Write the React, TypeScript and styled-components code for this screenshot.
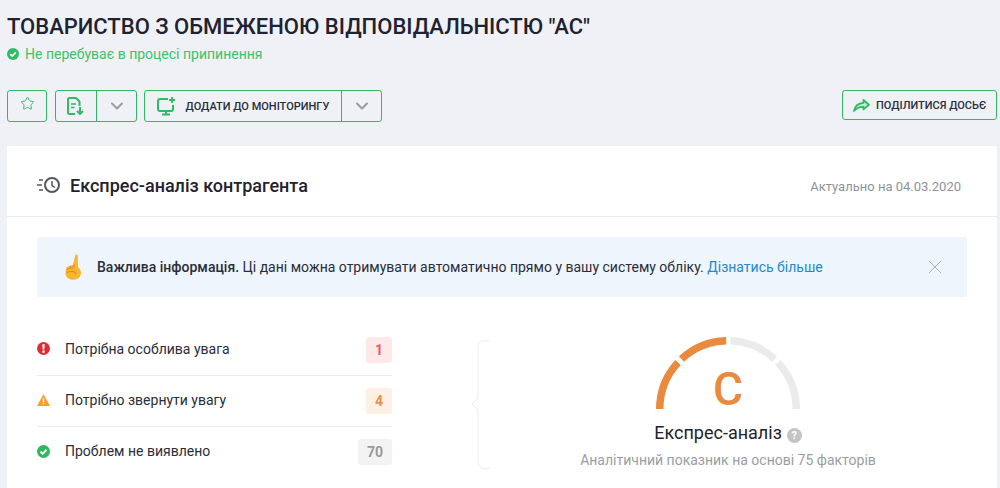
import styled, { createGlobalStyle } from "styled-components"
import { Star, ChevronDown, X } from "lucide-react"

const GlobalStyle = createGlobalStyle`
  html, body {
    margin: 0;
    padding: 0;
    background: #eff1f7;
    font-family: Roboto, "Liberation Sans", sans-serif;
    color: #1f2230;
    overflow: hidden;
  }
`

const Page = styled.div`
  width: 1000px;
  height: 488px;
  overflow: hidden;
  padding: 13px 0 0 7px;
  box-sizing: border-box;
`
const Title = styled.h1`
  margin: 0;
  font-size: 22px;
  line-height: 28px;
  font-weight: 500;
  color: #1f2230;
`
const Status = styled.div`
  display: flex;
  align-items: center;
  gap: 6px;
  margin-top: 4px;
  font-size: 14px;
  line-height: 18px;
  color: #3cc36a;
`
const Toolbar = styled.div`
  display: flex;
  align-items: flex-start;
  margin-top: 27px;
  padding-right: 3px;
`
const BtnGroup = styled.div`
  display: flex;
  height: 32px;
  box-sizing: border-box;
  border: 1px solid #2fbb62;
  border-radius: 3px;
  margin-right: 8px;
  &:nth-child(2) {
    margin-right: 7px;
  }
`
const BtnPart = styled.div<{ $w: number }>`
  display: flex;
  align-items: center;
  justify-content: center;
  gap: 10px;
  box-sizing: border-box;
  width: ${p => p.$w}px;
  color: #2fbb62;
  & + & {
    border-left: 1px solid #2fbb62;
  }
`
const StarIcon = styled(Star)`
  margin-bottom: 5px;
`
const BtnText = styled.span`
  font-size: 11px;
  font-weight: 500;
  white-space: nowrap;
  color: #2a2d3a;
`
const ShareBtn = styled(BtnGroup)`
  margin: 0 0 0 auto;
  height: 30px;
  align-items: center;
  width: 155px;
  padding-left: 10px;
  gap: 6px;
`
const Card = styled.section`
  margin-top: 24px;
  width: 990px;
  height: 360px;
  background: #fff;
`
const CardHead = styled.header`
  display: flex;
  align-items: center;
  justify-content: space-between;
  box-sizing: border-box;
  height: 71px;
  padding: 10px 36px 0 30px;
  border-bottom: 1px solid #e9eaee;
`
const CardTitle = styled.div`
  display: flex;
  align-items: center;
  gap: 9px;
  margin-bottom: 2px;
  font-size: 18px;
  font-weight: 500;
`
const Actual = styled.div`
  font-size: 13px;
  color: #8f929b;
`
const Banner = styled.div`
  display: flex;
  align-items: center;
  height: 60px;
  margin: 20px 30px 0 30px;
  padding: 0 20px 0 28px;
  background: #eff5fc;
  border-radius: 3px;
  font-size: 14px;
`
const Hand = styled.svg`
  flex: none;
  margin-right: 16px;
`
const BannerText = styled.div`
  flex: 1;
  color: #2a2d3a;
  b {
    font-weight: 500;
  }
  a {
    color: #2289cf;
    text-decoration: none;
  }
`
const Body = styled.div`
  display: flex;
  margin: 27px 30px 0 30px;
`
const List = styled.div`
  flex: none;
  width: 355px;
`
const Row = styled.div`
  display: flex;
  align-items: center;
  box-sizing: border-box;
  height: 51px;
  font-size: 14px;
  color: #2a2d3a;
  & + & {
    border-top: 1px solid #eceded;
  }
`
const RowIcon = styled.span`
  display: flex;
  justify-content: center;
  width: 13px;
  margin: 0 15px 2px 0;
`
const RowLabel = styled.span`
  margin-bottom: 2px;
`
const Count = styled.span<{ $bg: string; $fg: string }>`
  margin-left: auto;
  min-width: 26px;
  padding: 0 9px;
  box-sizing: border-box;
  height: 26px;
  line-height: 26px;
  text-align: center;
  font-size: 14px;
  font-weight: 700;
  border-radius: 3px;
  background: ${p => p.$bg};
  color: ${p => p.$fg};
`
const Brace = styled.svg`
  flex: none;
  margin: 16px 0 0 79px;
`
const Score = styled.div`
  flex: none;
  width: 476px;
  padding-top: 13px;
  display: flex;
  flex-direction: column;
  align-items: center;
`
const Gauge = styled.div`
  position: relative;
  width: 144px;
  height: 72px;
`
const Grade = styled.span`
  position: absolute;
  left: 0;
  right: 0;
  bottom: -5px;
  text-align: center;
  font-size: 46px;
  font-weight: 500;
  line-height: 50px;
  color: #ea8a3f;
`
const ScoreTitle = styled.div`
  display: flex;
  align-items: center;
  gap: 5px;
  margin-top: 13px;
  font-size: 18px;
  line-height: 22px;
`
const Help = styled.span`
  display: inline-flex;
  align-items: center;
  justify-content: center;
  width: 15px;
  height: 15px;
  margin-top: 5px;
  border-radius: 50%;
  background: #c4c4c4;
  color: #fff;
  font-size: 11px;
  font-weight: 700;
`
const ScoreSub = styled.div`
  margin-top: 8px;
  font-size: 14px;
  color: #9a9da3;
`

const CheckCircle = ({ size, color }: { size: number; color: string }) => (
  <svg width={size} height={size} viewBox="0 0 14 14">
    <circle cx="7" cy="7" r="7" fill={color} />
    <path d="M3.8 7.2l2.3 2.3 4.2-4.4" fill="none" stroke="#fff" strokeWidth="2" />
  </svg>
)

const ReportIcon = () => (
  <svg width="18" height="18" viewBox="0 0 18 18" fill="none" stroke="#2fbb62" strokeWidth="2">
    <path d="M8 17H2.500A1.500 1.500 0 0 1 1 15.500V2.500A1.500 1.500 0 0 1 2.500 1H9l3.500 3.500V9" strokeLinejoin="round" />
    <path d="M4 7h5M4 10.500h3.500" strokeWidth="1.600" />
    <path d="M13 10v7M10 14l3 3 3-3" />
  </svg>
)

const MonitorIcon = () => (
  <svg width="19" height="19" viewBox="0 0 19 19" fill="none" stroke="#2fbb62" strokeWidth="2">
    <path d="M11 2H3a2 2 0 0 0-2 2v8a2 2 0 0 0 2 2h11a2 2 0 0 0 2-2V8" />
    <path d="M9 14v3M5 17.500h8" />
    <path d="M15 0v6M12 3h6" strokeWidth="1.800" />
  </svg>
)

const ShareIcon = () => (
  <svg width="17" height="13" viewBox="0 0 17 13">
    <path d="M10.500 1l5.500 4.700-5.500 4.700V7.800C6.500 7.600 3.500 9 1 12c.8-4.800 4.200-7.800 9.500-8.200z" fill="#bff0d0" stroke="#2fbb62" strokeWidth="1.800" strokeLinejoin="round" />
  </svg>
)

const HistoryIcon = () => (
  <svg width="24" height="18" viewBox="0 0 24 18" fill="none" stroke="#55585f" strokeWidth="2">
    <circle cx="15" cy="9" r="7" />
    <path d="M15 5v4.500l3 2" strokeWidth="1.500" />
    <path d="M2 4h4M0 9h5M2 14h4" strokeWidth="1.600" />
  </svg>
)

const gaugeArc = (from: number, to: number) => {
  const r = 68.25
  const c = 72
  const pt = (deg: number) => {
    const a = (deg * Math.PI) / 180
    return `${(c - r * Math.cos(a)).toFixed(2)} ${(c - r * Math.sin(a)).toFixed(2)}`
  }
  return `M${pt(from)} A${r} ${r} 0 0 1 ${pt(to)}`
}

const segments = [
  { from: 0, to: 43, color: "#ea8a3f" },
  { from: 47, to: 88.5, color: "#ea8a3f" },
  { from: 92, to: 133, color: "#ebebeb" },
  { from: 137, to: 180, color: "#ebebeb" },
]

const rows = [
  {
    label: "Потрібна особлива увага",
    count: 1,
    bg: "#fee9e9",
    fg: "#e8605c",
    icon: (
      <svg width="13" height="13" viewBox="0 0 13 13">
        <circle cx="6.500" cy="6.500" r="6.500" fill="#dc2d35" />
        <path d="M5.300 2.300h2.400l-.4 5.200H5.700zM5.400 8.500h2.200v2.200H5.400z" fill="#fff" />
      </svg>
    ),
  },
  {
    label: "Потрібно звернути увагу",
    count: 4,
    bg: "#fff0e5",
    fg: "#f08c4c",
    icon: (
      <svg width="13" height="12" viewBox="0 0 13 12">
        <path d="M6.500 0L13 12H0z" fill="#f5a031" />
        <path d="M5.800 4h1.400v4H5.800zM5.800 8.800h1.400v1.500H5.800z" fill="#fff" />
      </svg>
    ),
  },
  {
    label: "Проблем не виявлено",
    count: 70,
    bg: "#f3f3f3",
    fg: "#9a9a9a",
    icon: <CheckCircle size={13} color="#2fb760" />,
  },
]

export default function App() {
  return (
    <Page>
      <GlobalStyle />
      <Title>ТОВАРИСТВО З ОБМЕЖЕНОЮ ВІДПОВІДАЛЬНІСТЮ "АС"</Title>
      <Status>
        <CheckCircle size={12} color="#2fbb62" />
        Не перебуває в процесі припинення
      </Status>
      <Toolbar>
        <BtnGroup>
          <BtnPart $w={38}>
            <StarIcon size={15} strokeWidth={1.5} />
          </BtnPart>
        </BtnGroup>
        <BtnGroup>
          <BtnPart $w={40}>
            <ReportIcon />
          </BtnPart>
          <BtnPart $w={40}>
            <ChevronDown size={20} color="#9b9da3" strokeWidth={2.5} />
          </BtnPart>
        </BtnGroup>
        <BtnGroup>
          <BtnPart $w={196}>
            <MonitorIcon />
            <BtnText>ДОДАТИ ДО МОНІТОРИНГУ</BtnText>
          </BtnPart>
          <BtnPart $w={40}>
            <ChevronDown size={20} color="#9b9da3" strokeWidth={2.5} />
          </BtnPart>
        </BtnGroup>
        <ShareBtn>
          <ShareIcon />
          <BtnText>ПОДІЛИТИСЯ ДОСЬЄ</BtnText>
        </ShareBtn>
      </Toolbar>
      <Card>
        <CardHead>
          <CardTitle>
            <HistoryIcon />
            Експрес-аналіз контрагента
          </CardTitle>
          <Actual>Актуально на 04.03.2020</Actual>
        </CardHead>
        <Banner>
          <Hand width="16" height="26" viewBox="0 0 16 26">
            <path d="M10.500 0.500c1.300-.4 2.300.5 2.300 1.800l.2 11c2 1.400 3 3.300 3 5.500 0 4-3.300 7-7.500 7C3.700 25.800.5 23 .5 19c0-1.500.2-3 .6-4.300.4-1.400 1.500-2.300 3-2.700l3.900-1.200z" fill="#f6b62f" />
            <path d="M1.500 15.500c2-1.300 4.500-1.700 7-1.300M2 18.500c2.200-1 4.700-1.200 7.300-.6l2 2.300" fill="none" stroke="#d98a1e" strokeWidth="1.100" />
            <path d="M9 10.500v3M5.200 12v2.500" fill="none" stroke="#d98a1e" strokeWidth="1" />
          </Hand>
          <BannerText>
            <b>Важлива інформація.</b> Ці дані можна отримувати автоматично прямо у вашу систему обліку. <a href="#more">Дізнатись більше</a>
          </BannerText>
          <X size={24} color="#a9b5c5" strokeWidth={1} />
        </Banner>
        <Body>
          <List>
            {rows.map(r => (
              <Row key={r.label}>
                <RowIcon>{r.icon}</RowIcon>
                <RowLabel>{r.label}</RowLabel>
                <Count $bg={r.bg} $fg={r.fg}>{r.count}</Count>
              </Row>
            ))}
          </List>
          <Brace width="19" height="129" viewBox="0 0 19 129" fill="none" stroke="#eef0f1" strokeWidth="1.2">
            <path d="M19 .6h-6a6 6 0 0 0-6 6V58L1 64l6 6v52.400a6 6 0 0 0 6 6h6" />
          </Brace>
          <Score>
            <Gauge>
              <svg width="144" height="72" viewBox="0 0 144 72" fill="none">
                {segments.map(s => (
                  <path key={s.from} d={gaugeArc(s.from, s.to)} stroke={s.color} strokeWidth="7.5" />
                ))}
              </svg>
              <Grade>C</Grade>
            </Gauge>
            <ScoreTitle>
              Експрес-аналіз
              <Help>?</Help>
            </ScoreTitle>
            <ScoreSub>Аналітичний показник на основі 75 факторів</ScoreSub>
          </Score>
        </Body>
      </Card>
    </Page>
  )
}
